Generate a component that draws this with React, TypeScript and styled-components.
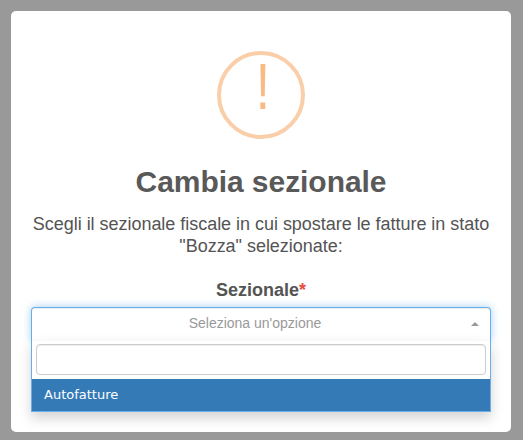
import React from "react";
import styled, { createGlobalStyle } from "styled-components";

const GlobalStyle = createGlobalStyle`
  *, *::before, *::after { box-sizing: border-box; }
  body { margin: 0; background: #999; font-family: "Liberation Sans", Arial, sans-serif; }
`;

const Overlay = styled.div`
  height: 440px;
  padding: 11px 12px 8px 11px;
  overflow: hidden;
`;

const Modal = styled.section`
  height: 421px;
  padding: 40px 20px 0;
  border-radius: 5px;
  background: #fff;
  color: #545454;
  text-align: center;
`;

const WarningIcon = styled.div`
  display: flex;
  align-items: center;
  justify-content: center;
  width: 88px;
  height: 88px;
  margin: 0 auto;
  padding: 0 0 16px 3px;
  border: 4px solid #facea8;
  border-radius: 50%;
  color: #f8bb86;
  font-size: 64px;
  line-height: 80px;
`;

const Mark = styled.span`
  transform: scaleX(0.8);
`;

const Title = styled.h2`
  margin: 25px 0 0;
  color: #595959;
  font-size: 30px;
  font-weight: 700;
  letter-spacing: -0.05px;
  line-height: 36px;
`;

const Message = styled.p`
  margin: 13px -5px 0;
  font-size: 18px;
  letter-spacing: -0.03px;
  line-height: 22px;
`;

const Label = styled.label`
  display: block;
  margin-top: 22px;
  font-size: 18px;
  font-weight: 700;
  line-height: 22px;
`;

const Required = styled.span`
  color: #e74c3c;
`;

const Select = styled.div`
  margin-top: 6px;
`;

const Selection = styled.div`
  display: flex;
  align-items: center;
  height: 34px;
  padding: 0 11px;
  border: 1px solid #66afe9;
  border-bottom: 0;
  border-radius: 4px 4px 0 0;
  box-shadow: inset 0 1px 1px rgba(0, 0, 0, 0.075), 0 0 8px rgba(102, 175, 233, 0.6);
  color: #999;
  font-size: 14px;
`;

const Placeholder = styled.span`
  flex: 1;
  padding: 0 4px 3px 0;
`;

const Caret = styled.i`
  margin-bottom: 2px;
  border: 4px solid transparent;
  border-top: 0;
  border-bottom-color: #999;
`;

const Dropdown = styled.div`
  position: relative;
  height: 71px;
  padding-top: 3px;
  border: 1px solid #66afe9;
  border-top: 0;
  background: #fff;
  box-shadow: 0 6px 12px rgba(0, 0, 0, 0.175);
`;

const Search = styled.input`
  display: block;
  width: calc(100% - 8px);
  height: 31px;
  margin: 0 4px 4px;
  border: 1px solid #ccc;
  border-radius: 4px;
  outline: 0;
  box-shadow: inset 0 1px 1px rgba(0, 0, 0, 0.075);
`;

const Option = styled.div`
  height: 32px;
  padding: 0 12px;
  background: #337ab7;
  color: #fff;
  font: 13px/32px "DejaVu Sans", sans-serif;
  text-align: left;
`;

export default function App() {
  return (
    <Overlay>
      <GlobalStyle />
      <Modal>
        <WarningIcon>
          <Mark>!</Mark>
        </WarningIcon>
        <Title>Cambia sezionale</Title>
        <Message>
          Scegli il sezionale fiscale in cui spostare le fatture in stato
          <br />
          "Bozza" selezionate:
        </Message>
        <Label>Sezionale<Required>*</Required></Label>
        <Select>
          <Selection>
            <Placeholder>Seleziona un'opzione</Placeholder>
            <Caret />
          </Selection>
          <Dropdown>
            <Search aria-label="Cerca" />
            <Option>Autofatture</Option>
          </Dropdown>
        </Select>
      </Modal>
    </Overlay>
  );
}
